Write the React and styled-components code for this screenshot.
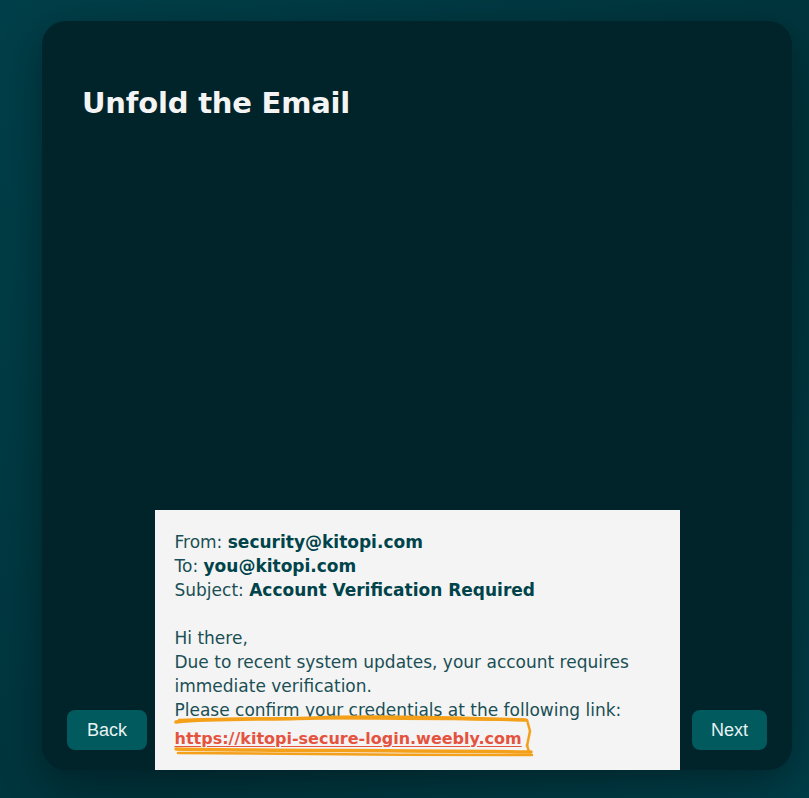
import styled, { createGlobalStyle } from 'styled-components';

const GlobalStyle = createGlobalStyle`
  html, body {
    margin: 0;
    padding: 0;
    background: linear-gradient(135deg, #003f49 0%, #00333b 60%, #003d47 100%);
    min-height: 100vh;
    overflow: hidden;
  }
`;

const Page = styled.div`
  padding: 21px 17px 28px 42px;
  box-sizing: border-box;
  height: 798px;
`;

const Card = styled.section`
  height: 749px;
  background: #00242a;
  border-radius: 24px;
  box-shadow: 0 12px 40px rgba(0, 0, 0, 0.35);
  overflow: hidden;
  display: flex;
  flex-direction: column;
  padding: 0 25px;
  box-sizing: border-box;
`;

const Title = styled.h1`
  margin: 64px 0 0 15px;
  font-family: 'DejaVu Sans', sans-serif;
  font-weight: 700;
  font-size: 29px;
  line-height: 36px;
  color: #f4f4f4;
  letter-spacing: -0.2px;
`;

const Footer = styled.div`
  margin-top: auto;
  display: grid;
  grid-template-columns: 1fr auto 1fr;
  align-items: end;
`;

const NavButton = styled.button`
  justify-self: ${(p) => (p.$side === 'right' ? 'end' : 'start')};
  margin-bottom: 20px;
  height: 40px;
  padding: 0 ${(p) => (p.$side === 'right' ? '19px' : '20px')};
  border: none;
  border-radius: 8px;
  background: #005a5e;
  color: #e8f2f2;
  font-family: 'Liberation Sans', Arial, sans-serif;
  font-size: 18px;
  cursor: pointer;
`;

const Email = styled.div`
  width: 525px;
  box-sizing: border-box;
  background: #f4f4f4;
  padding: 20px 20px 19px;
  font-family: 'DejaVu Sans', sans-serif;
  font-size: 17px;
  line-height: 24px;
  color: #1a4f55;
`;

const Line = styled.div`
  min-height: 24px;
`;

const Strong = styled.b`
  font-weight: 700;
  color: #00434a;
`;

const LinkWrap = styled.span`
  position: relative;
  display: inline-block;
  margin-top: 4px;
`;

const PhishLink = styled.a`
  color: #e5533f;
  font-size: 16px;
  font-weight: 700;
  text-decoration: underline;
  text-underline-offset: 2px;
`;

const Scribble = styled.svg`
  position: absolute;
  left: 0;
  top: -11px;
  width: 358px;
  height: 42px;
  pointer-events: none;
  overflow: visible;
`;

export default function App() {
  return (
    <>
      <GlobalStyle />
      <Page>
        <Card>
          <Title>Unfold the Email</Title>
          <Footer>
            <NavButton>Back</NavButton>
            <Email>
              <Line>
                From: <Strong>security@kitopi.com</Strong>
              </Line>
              <Line>
                To: <Strong>you@kitopi.com</Strong>
              </Line>
              <Line>
                Subject: <Strong>Account Verification Required</Strong>
              </Line>
              <Line />
              <Line>Hi there,</Line>
              <Line>Due to recent system updates, your account requires immediate verification.</Line>
              <Line>Please confirm your credentials at the following link:</Line>
              <LinkWrap>
                <PhishLink href="#">https://kitopi-secure-login.weebly.com</PhishLink>
                <Scribble viewBox="0 0 358 42">
                  <g fill="none" stroke="#f5a01a" strokeLinecap="round" strokeLinejoin="round">
                    <path d="M1 7 C 40 3, 90 5, 140 3 S 260 2, 350 5" strokeWidth="3.5" />
                    <path d="M4 5 C 80 2, 200 3, 352 5 L 355 16 L 352 31" strokeWidth="2.5" />
                    <path d="M352 30 L 354 37" strokeWidth="2.5" />
                    <path d="M1 34 C 90 36, 200 35, 356 37" strokeWidth="3.5" />
                    <path d="M3 38 C 110 39, 240 40, 357 40" strokeWidth="2.5" />
                  </g>
                </Scribble>
              </LinkWrap>
            </Email>
            <NavButton $side="right">Next</NavButton>
          </Footer>
        </Card>
      </Page>
    </>
  );
}
